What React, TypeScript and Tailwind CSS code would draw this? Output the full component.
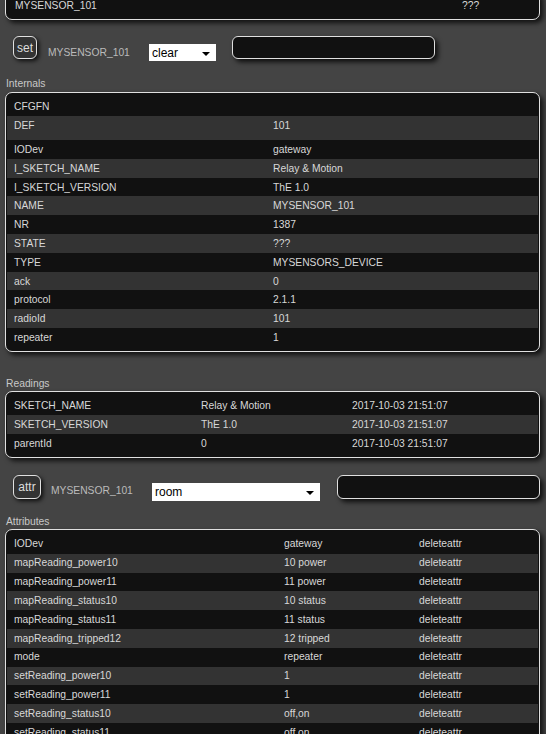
import React from "react"

type Row = string[]

const internals: Row[] = [
  ["CFGFN", ""],
  ["DEF", "101"],
  ["IODev", "gateway"],
  ["I_SKETCH_NAME", "Relay & Motion"],
  ["I_SKETCH_VERSION", "ThE 1.0"],
  ["NAME", "MYSENSOR_101"],
  ["NR", "1387"],
  ["STATE", "???"],
  ["TYPE", "MYSENSORS_DEVICE"],
  ["ack", "0"],
  ["protocol", "2.1.1"],
  ["radioId", "101"],
  ["repeater", "1"],
]

const readings: Row[] = [
  ["SKETCH_NAME", "Relay & Motion", "2017-10-03 21:51:07"],
  ["SKETCH_VERSION", "ThE 1.0", "2017-10-03 21:51:07"],
  ["parentId", "0", "2017-10-03 21:51:07"],
]

const attributes: Row[] = [
  ["IODev", "gateway"],
  ["mapReading_power10", "10 power"],
  ["mapReading_power11", "11 power"],
  ["mapReading_status10", "10 status"],
  ["mapReading_status11", "11 status"],
  ["mapReading_tripped12", "12 tripped"],
  ["mode", "repeater"],
  ["setReading_power10", "1"],
  ["setReading_power11", "1"],
  ["setReading_status10", "off,on"],
  ["setReading_status11", "off,on"],
]

function Panel({ children, className = "" }: { children: React.ReactNode; className?: string }) {
  return (
    <div
      className={`rounded-[7px] border border-[#e0e0e0] bg-[#111] px-[1px] py-[4px] shadow-[3px_3px_5px_rgba(0,0,0,0.75)] ${className}`}
    >
      {children}
    </div>
  )
}

function Arrow() {
  return <span className="ml-auto mr-[6px] mt-[2px] h-0 w-0 border-x-[4px] border-t-[4px] border-x-transparent border-t-black" />
}

function Label({ children, className = "" }: { children: React.ReactNode; className?: string }) {
  return <div className={`pl-[1px] text-[10.3px] leading-[13px] text-[#c8c8c8] ${className}`}>{children}</div>
}

function CmdButton({ label, w }: { label: string; w: string }) {
  return (
    <div
      className={`flex ${w} h-full items-center justify-center rounded-[6px] border border-[#e0e0e0] bg-[#333] text-[12px] text-[#ddd] shadow-[2px_2px_4px_rgba(0,0,0,0.8)]`}
    >
      {label}
    </div>
  )
}

export default function App() {
  return (
    <div
      className="min-h-[734px] overflow-hidden bg-[#444] pl-[5px] pr-[6px] text-[10.3px] text-[#d8d8d8]"
      style={{ fontFamily: '"Liberation Sans", Arial, sans-serif' }}
    >
      <Panel className="mt-[-9px]">
        <div className="flex h-[19px] items-center bg-[#111]">
          <span className="w-[455px] pl-[8px]">MYSENSOR_101</span>
          <span>???</span>
        </div>
      </Panel>

      <div className="mt-[16px] flex h-[23px] items-start">
        <div className="ml-[8px] h-full">
          <CmdButton label="set" w="w-[24px]" />
        </div>
        <span className="ml-[11px] mt-[9px] w-[101px] text-[#bbb]">MYSENSOR_101</span>
        <div className="mt-[8px] flex h-[17px] w-[67px] items-center bg-white pl-[3px] text-[12px] text-black">
          clear
          <Arrow />
        </div>
        <div className="ml-[16px] h-full w-[203px] rounded-[6px] border border-[#e0e0e0] bg-[#111] shadow-[3px_3px_5px_rgba(0,0,0,0.8)]" />
      </div>

      <Label className="mt-[18px]">Internals</Label>
      <Panel className="mt-[2px]">
        {internals.map(([k, v], i) => (
          <div
            key={k}
            className={`flex items-start pt-[3px] leading-[13px] ${i % 2 ? "bg-[#333]" : "bg-[#111]"} ${
              i === 1 ? "h-[24px]" : i === 0 ? "h-[19px]" : "h-[18.8px]"
            }`}
          >
            <span className="w-[266px] pl-[7px]">{k}</span>
            <span>{v}</span>
          </div>
        ))}
      </Panel>

      <Label className="mt-[25px]">Readings</Label>
      <Panel className="mt-[1px]">
        {readings.map(([k, v, t], i) => (
          <div
            key={k}
            className={`flex h-[19px] items-center ${i % 2 ? "bg-[#333]" : "bg-[#111]"}`}
          >
            <span className="w-[194px] pl-[7px]">{k}</span>
            <span className="w-[151px]">{v}</span>
            <span>{t}</span>
          </div>
        ))}
      </Panel>

      <div className="mt-[17px] flex h-[24px] items-start">
        <div className="ml-[8px] h-full">
          <CmdButton label="attr" w="w-[28px]" />
        </div>
        <span className="ml-[10px] mt-[8px] w-[101px] text-[#bbb]">MYSENSOR_101</span>
        <div className="mt-[8px] flex h-[18px] w-[168px] items-center bg-white pl-[3px] text-[12px] text-black">
          room
          <Arrow />
        </div>
        <div className="ml-[17px] h-full w-[203px] rounded-[6px] border border-[#e0e0e0] bg-[#111] shadow-[3px_3px_5px_rgba(0,0,0,0.8)]" />
      </div>

      <Label className="mt-[16px]">Attributes</Label>
      <Panel className="mt-[1px]">
        {attributes.map(([k, v], i) => (
          <div
            key={k}
            className={`flex items-center ${i === 0 ? "h-[20px]" : "h-[18.8px]"} ${i % 2 ? "bg-[#333]" : "bg-[#111]"}`}
          >
            <span className="w-[277px] pl-[7px]">{k}</span>
            <span className="w-[135px]">{v}</span>
            <span>deleteattr</span>
          </div>
        ))}
      </Panel>
    </div>
  )
}
